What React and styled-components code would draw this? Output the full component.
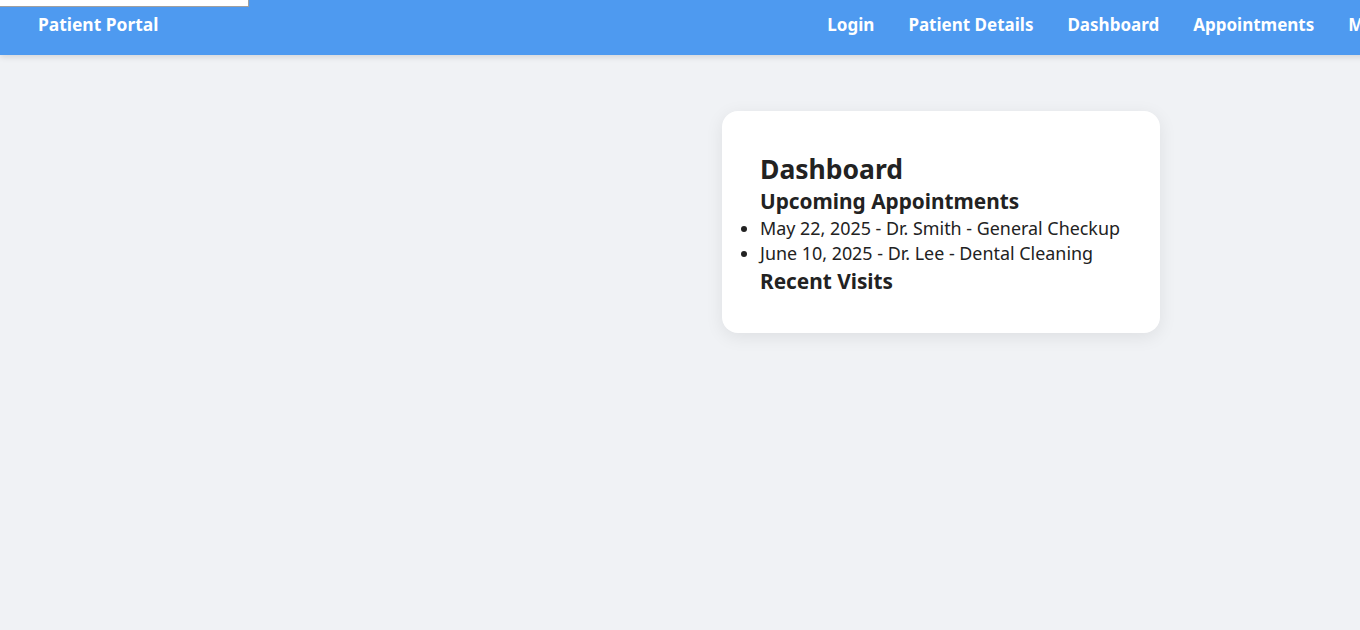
import React from 'react';
import styled, { createGlobalStyle } from 'styled-components';

const GlobalStyle = createGlobalStyle`
    html, body {
        margin: 0;
        padding: 0;
        overflow: hidden;
        background: #f0f2f5;
        font-family: "Noto Sans", "Open Sans", sans-serif;
        color: #222;
    }
`;

const Page = styled.div`
    width: 1882px;
    min-height: 630px;
    position: relative;
`;

const Strip = styled.div`
    position: absolute;
    top: 0;
    left: 0;
    width: 248px;
    height: 6px;
    background: white;
    border-right: 1px solid #a0a0a0;
    border-bottom: 1px solid #a0a0a0;
    z-index: 2;
`;

const Nav = styled.nav`
    height: 55px;
    background: #4e9af0;
    display: flex;
    align-items: center;
    justify-content: space-between;
    padding: 0 26px 7px 38px;
    box-sizing: border-box;
    box-shadow: 0 2px 6px rgba(0, 0, 0, 0.12);
`;

const Brand = styled.div`
    color: white;
    font-weight: 700;
    font-size: 17.4px;
`;

const Links = styled.ul`
    display: flex;
    gap: 34px;
    list-style: none;
    margin: 0;
    padding: 0;
`;

const LinkItem = styled.li`
    color: white;
    font-weight: 700;
    font-size: 17px;
    white-space: nowrap;
`;

const Main = styled.main`
    display: flex;
    justify-content: center;
    padding-top: 56px;
`;

const Card = styled.section`
    background: white;
    border-radius: 16px;
    box-shadow: 0 4px 18px rgba(0, 0, 0, 0.08);
    padding: 40px 38px 37px;
    width: 438px;
    box-sizing: border-box;
`;

const Title = styled.h2`
    margin: 0;
    font-size: 26.5px;
    line-height: 36px;
    font-weight: 700;
`;

const SubTitle = styled.h3`
    margin: ${(p) => (p.$gap ? '1px' : '0')} 0 0;
    font-size: 20.8px;
    line-height: 29px;
    font-weight: 700;
    white-space: nowrap;
`;

const List = styled.ul`
    margin: 0;
    padding: 0;
`;

const Item = styled.li`
    font-size: 17.9px;
    line-height: 25px;
    white-space: nowrap;
`;

const links = ["Login", "Patient Details", "Dashboard", "Appointments", "Medical Records", "Prescriptions", "Lab Results", "Logout"];

export default function App() {
    return (
        <Page>
            <GlobalStyle />
            <Strip />
            <Nav>
                <Brand>Patient Portal</Brand>
                <Links>
                    {links.map((l) => (
                        <LinkItem key={l}>{l}</LinkItem>
                    ))}
                </Links>
            </Nav>
            <Main>
                <Card>
                    <Title>Dashboard</Title>
                    <SubTitle>Upcoming Appointments</SubTitle>
                    <List>
                        <Item>May 22, 2025 - Dr. Smith - General Checkup</Item>
                        <Item>June 10, 2025 - Dr. Lee - Dental Cleaning</Item>
                    </List>
                    <SubTitle $gap>Recent Visits</SubTitle>
                </Card>
            </Main>
        </Page>
    );
}
